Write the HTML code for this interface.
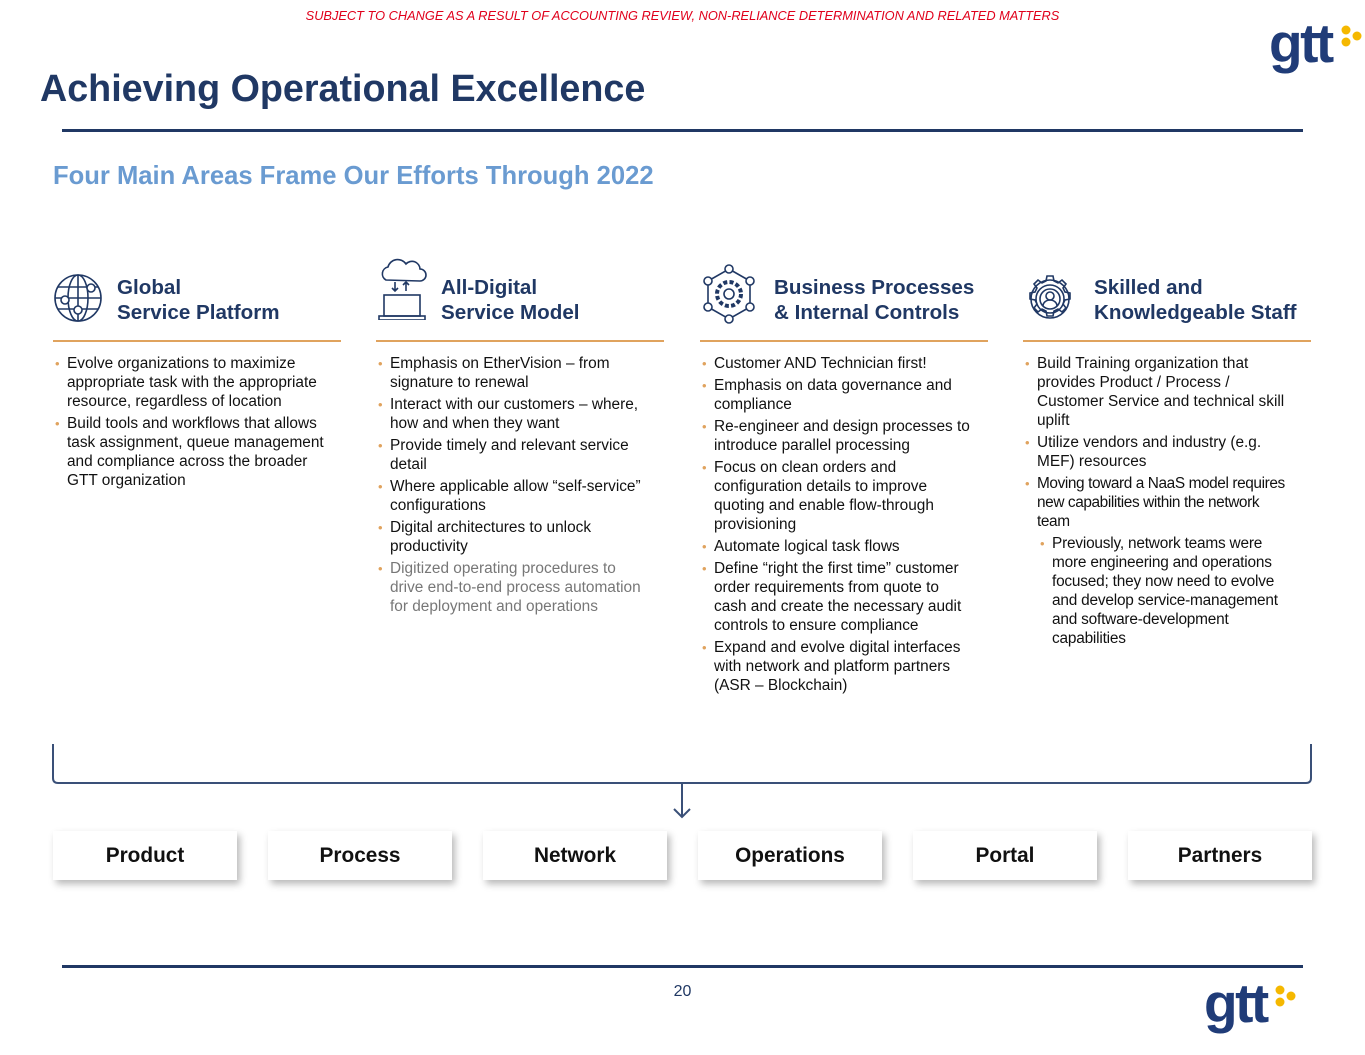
<!DOCTYPE html>
<html><head><meta charset="utf-8"><style>
*{margin:0;padding:0;box-sizing:border-box}
body{width:1365px;height:1055px;background:#fff;position:relative;font-family:"Liberation Sans",Arial,sans-serif;overflow:hidden}
.abs{position:absolute}
.disc{top:8px;left:0;width:1365px;text-align:center;color:#e0001b;font-style:italic;font-size:12.8px;font-family:"Liberation Sans",sans-serif}
h1{position:absolute;left:40px;top:67px;font-size:37.7px;color:#203864;font-weight:bold}
.rule{height:3px;background:#203864;left:62px;width:1241px}
.sub{left:53px;top:162px;font-size:25.6px;font-weight:bold;color:#6a9bd1}
.col{position:absolute;top:262px;width:288px}
.hd{height:80px;border-bottom:2px solid #e0a35e;position:relative}
.hd svg{position:absolute;left:0;top:8px}
.hd .t{position:absolute;left:64px;top:13px;font-size:20.6px;font-weight:bold;color:#203864;line-height:25px}
ul{list-style:none;margin-top:12px;padding-right:14px}
li{position:relative;padding-left:14px;font-size:15.4px;line-height:19px;color:#111;margin-bottom:3px}
li:before{content:"•";position:absolute;left:2px;top:0;color:#e0a35e;font-size:13px}
li.s{margin-left:15px;margin-right:8px}
li.g{color:#777}
.box{position:absolute;top:831px;width:184px;height:49px;background:#fff;box-shadow:3px 4px 7px rgba(0,0,0,.28);text-align:center;line-height:49px;font-size:20.8px;font-weight:bold;color:#111}
</style></head><body>
<div class="abs disc">SUBJECT TO CHANGE AS A RESULT OF ACCOUNTING REVIEW, NON-RELIANCE DETERMINATION AND RELATED MATTERS</div>
<div class="abs" style="left:1269px;top:12px;font-size:55px;font-weight:bold;color:#203c78;letter-spacing:-2.5px;line-height:62px">gtt</div>
<svg class="abs" style="left:1340px;top:24px" width="24" height="26"><circle cx="6" cy="6" r="4.5" fill="#f5b800"/><circle cx="17" cy="12" r="4.5" fill="#f5b800"/><circle cx="6" cy="18" r="4.5" fill="#f5b800"/></svg>
<h1>Achieving Operational Excellence</h1>
<div class="abs rule" style="top:129px"></div>
<div class="abs sub">Four Main Areas Frame Our Efforts Through 2022</div>

<div class="col" style="left:53px">
<div class="hd"><svg width="52" height="56" viewBox="0 0 52 56" fill="none" stroke="#203864" stroke-width="1.6"><circle cx="25" cy="28" r="23"/><ellipse cx="25" cy="28" rx="10" ry="23"/><line x1="2" y1="28" x2="48" y2="28"/><line x1="5" y1="17" x2="45" y2="17"/><line x1="5" y1="39" x2="45" y2="39"/><line x1="25" y1="5" x2="25" y2="51"/><circle cx="38" cy="18" r="4" fill="#fff"/><circle cx="12" cy="30" r="4" fill="#fff"/><circle cx="25" cy="40" r="4" fill="#fff"/></svg><div class="t">Global<br>Service Platform</div></div>
<ul><li>Evolve organizations to maximize appropriate task with the appropriate resource, regardless of location</li><li>Build tools and workflows that allows task assignment, queue management and compliance across the broader GTT organization</li></ul></div>

<div class="col" style="left:376px">
<div class="hd"><svg width="52" height="62" viewBox="0 0 52 62" fill="none" stroke="#203864" stroke-width="1.6" style="top:-4px"><path d="M10 22 a7 7 0 0 1 2-13 a10 10 0 0 1 18-3 a8 8 0 0 1 14 5 a6 6 0 0 1 0 12 z"/><path d="M19 24v9M16 30l3 3 3-3M30 33v-9M27 27l3-3 3 3"/><rect x="8" y="37" width="36" height="21"/><rect x="3" y="58" width="46" height="4"/></svg><div class="t" style="left:65px">All-Digital<br>Service Model</div></div>
<ul><li>Emphasis on EtherVision – from signature to renewal</li><li>Interact with our customers – where, how and when they want</li><li>Provide timely and relevant service detail</li><li>Where applicable allow “self-service” configurations</li><li>Digital architectures to unlock productivity</li><li class="g">Digitized operating procedures to drive end-to-end process automation for deployment and operations</li></ul></div>

<div class="col" style="left:700px">
<div class="hd"><svg width="58" height="64" viewBox="0 0 58 64" fill="none" stroke="#203864" stroke-width="1.6" style="top:2px"><path d="M29 5 L50 17 L50 43 L29 55 L8 43 L8 17 Z"/><circle cx="29" cy="5" r="4" fill="#fff"/><circle cx="50" cy="17" r="4" fill="#fff"/><circle cx="50" cy="43" r="4" fill="#fff"/><circle cx="29" cy="55" r="4" fill="#fff"/><circle cx="8" cy="43" r="4" fill="#fff"/><circle cx="8" cy="17" r="4" fill="#fff"/><circle cx="29" cy="30" r="12" stroke-dasharray="4 2.3" stroke-width="4"/><circle cx="29" cy="30" r="5"/></svg><div class="t" style="left:74px">Business Processes<br>&amp; Internal Controls</div></div>
<ul><li>Customer AND Technician first!</li><li>Emphasis on data governance and compliance</li><li>Re-engineer and design processes to introduce parallel processing</li><li>Focus on clean orders and configuration details to improve quoting and enable flow-through provisioning</li><li>Automate logical task flows</li><li>Define “right the first time” customer order requirements from quote to cash and create the necessary audit controls to ensure compliance</li><li>Expand and evolve digital interfaces with network and platform partners (ASR – Blockchain)</li></ul></div>

<div class="col" style="left:1023px">
<div class="hd"><svg width="56" height="56" viewBox="0 0 56 56" fill="none" stroke="#203864" stroke-width="1.6" style="top:10px"><circle cx="27" cy="27" r="19"/><circle cx="27" cy="27" r="14"/><circle cx="27" cy="27" r="10"/><circle cx="27" cy="24" r="4"/><path d="M20 34 a7 6 0 0 1 14 0"/><path d="M24 4h6l1 5 4 2 4-3 4 4-3 4 2 4 5 1v6l-5 1-2 4 3 4-4 4-4-3-4 2-1 5h-6l-1-5-4-2-4 3-4-4 3-4-2-4-5-1v-6l5-1 2-4-3-4 4-4 4 3 4-2z"/></svg><div class="t" style="left:71px">Skilled and<br>Knowledgeable Staff</div></div>
<ul><li>Build Training organization that provides Product / Process / Customer Service and technical skill uplift</li><li>Utilize vendors and industry (e.g. MEF) resources</li><li style="letter-spacing:-0.4px;margin-right:5px">Moving toward a NaaS model requires new capabilities within the network team</li><li class="s" style="letter-spacing:-0.2px">Previously, network teams were more engineering and operations focused; they now need to evolve and develop service-management and software-development capabilities</li></ul></div>

<svg class="abs" style="left:50px;top:742px" width="1265" height="80" fill="none" stroke="#3a5078" stroke-width="2"><path d="M3 2 V36 Q3 41 8 41 H1256 Q1261 41 1261 36 V2"/><path d="M632 42 V75 M624 67 L632 75 L640 67"/></svg>

<div class="box" style="left:53px">Product</div>
<div class="box" style="left:268px">Process</div>
<div class="box" style="left:483px">Network</div>
<div class="box" style="left:698px">Operations</div>
<div class="box" style="left:913px">Portal</div>
<div class="box" style="left:1128px">Partners</div>

<div class="abs rule" style="top:965px"></div>
<div class="abs" style="left:0;width:1365px;top:983px;text-align:center;font-size:16px;color:#203864">20</div>
<div class="abs" style="left:1204px;top:972px;font-size:55px;font-weight:bold;color:#203c78;letter-spacing:-2.5px;line-height:62px">gtt</div>
<svg class="abs" style="left:1274px;top:984px" width="24" height="26"><circle cx="6" cy="6" r="4.5" fill="#f5b800"/><circle cx="17" cy="12" r="4.5" fill="#f5b800"/><circle cx="6" cy="18" r="4.5" fill="#f5b800"/></svg>
</body></html>
